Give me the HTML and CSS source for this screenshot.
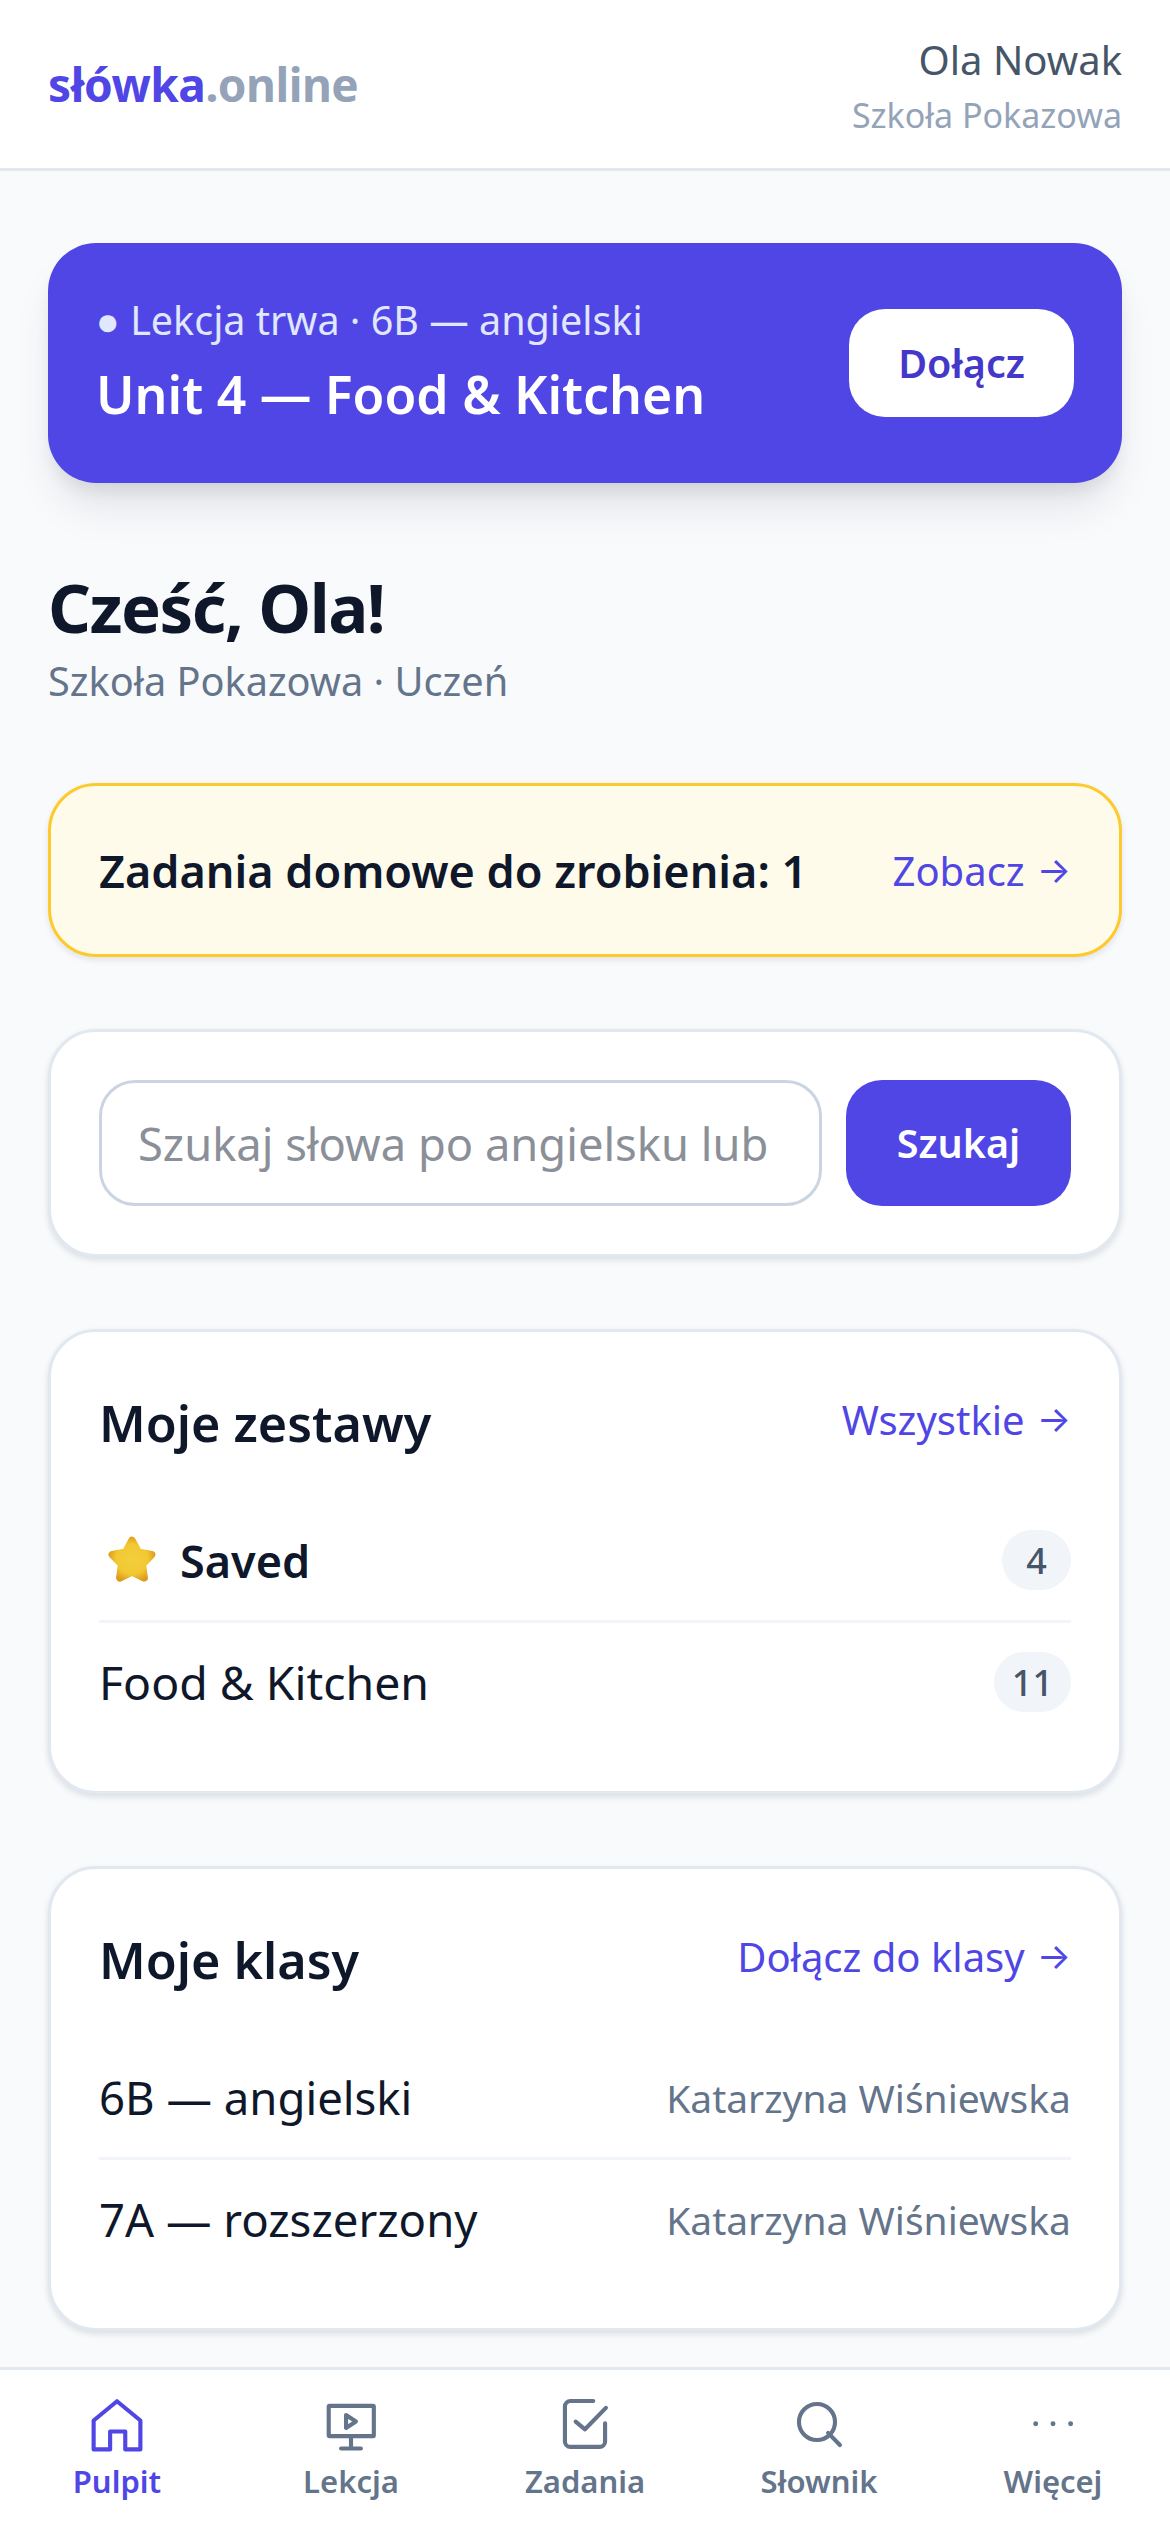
FILE: index.html
```html
<!DOCTYPE html>
<html lang="pl">
<head>
<meta charset="utf-8">
<title>słówka.online</title>
<link rel="stylesheet" href="styles.css">
</head>
<body>
<div class="app">
  <header class="topbar">
    <div class="logo">słówka<span class="logo-dim">.online</span></div>
    <div class="user">
      <div class="user-name">Ola Nowak</div>
      <div class="user-school">Szkoła Pokazowa</div>
    </div>
  </header>
  <main class="content">
    <section class="live">
      <div class="live-text">
        <div class="live-meta">● Lekcja trwa · 6B — angielski</div>
        <div class="live-title">Unit 4 — Food &amp; Kitchen</div>
      </div>
      <a class="live-btn">Dołącz</a>
    </section>
    <section class="greet">
      <h1>Cześć, Ola!</h1>
      <p>Szkoła Pokazowa · Uczeń</p>
    </section>
    <section class="hw">
      <span class="hw-text">Zadania domowe do zrobienia: 1</span>
      <a class="link">Zobacz <span class="arrow">→</span></a>
    </section>
    <section class="card search">
      <div class="search-input">Szukaj słowa po angielsku lub</div>
      <a class="search-btn">Szukaj</a>
    </section>
    <section class="card list-card">
      <div class="card-head">
        <h2>Moje zestawy</h2>
        <a class="link">Wszystkie <span class="arrow">→</span></a>
      </div>
      <div class="row">
        <span class="row-name strong">
          <svg class="star" viewBox="0 0 48 48"><defs><radialGradient id="sg" cx="0.5" cy="0.5" r="0.62"><stop offset="0" stop-color="#f3cf3d"/><stop offset="0.65" stop-color="#f2c832"/><stop offset="1" stop-color="#dd9a1c"/></radialGradient></defs><path d="M24 6l5.900 10.900L42.100 19.100 33.500 28.100 35.200 40.400 24 35 12.800 40.400 14.500 28.100 5.900 19.100 18.100 16.900z" fill="url(#sg)" stroke="url(#sg)" stroke-width="7" stroke-linejoin="round"/></svg>
          Saved
        </span>
        <span class="pill">4</span>
      </div>
      <div class="row">
        <span class="row-name wide">Food &amp; Kitchen</span>
        <span class="pill">11</span>
      </div>
    </section>
    <section class="card list-card">
      <div class="card-head">
        <h2>Moje klasy</h2>
        <a class="link">Dołącz do klasy <span class="arrow">→</span></a>
      </div>
      <div class="row">
        <span class="row-name">6B — angielski</span>
        <span class="row-side">Katarzyna Wiśniewska</span>
      </div>
      <div class="row">
        <span class="row-name">7A — rozszerzony</span>
        <span class="row-side">Katarzyna Wiśniewska</span>
      </div>
    </section>
  </main>
  <nav class="tabs">
    <a class="tab active">
      <svg class="ico" viewBox="0 0 24 24"><path d="M3.500 10 12 3l8.500 7v10.500h-5.500V14H9.500v6.500H3.500z"/></svg>
      <span>Pulpit</span>
    </a>
    <a class="tab">
      <svg class="ico" viewBox="0 0 24 24"><rect x="3.900" y="4.700" width="16.400" height="11" rx=".3"/><path d="M12 15.700v4.500M8.400 20.200h7.200"/><path d="M10.200 8l3.600 2.350-3.600 2.350z"/></svg>
      <span>Lekcja</span>
    </a>
    <a class="tab">
      <svg class="ico" viewBox="0 0 24 24"><path d="M8.600 10.400 12 13.200 19.600 5.400"/><path d="M15 2.900H6.700a2 2 0 0 0-2 2v12.700a2 2 0 0 0 2 2h10.600a2 2 0 0 0 2-2V11"/></svg>
      <span>Zadania</span>
    </a>
    <a class="tab">
      <svg class="ico" viewBox="0 0 24 24"><circle cx="11.270" cy="10.550" r="6.550"/><path d="m19.600 18.900-4.300-4.400"/></svg>
      <span>Słownik</span>
    </a>
    <a class="tab">
      <svg class="ico ico-dots" viewBox="0 0 24 24"><path d="M5.700 11.200h.01M12 11.200h.01M18.400 11.200h.01"/></svg>
      <span>Więcej</span>
    </a>
  </nav>
</div>
</body>
</html>
```
FILE: styles.css
```css
* { box-sizing: border-box; }
html, body { margin: 0; padding: 0; }
body {
  font-family: "Noto Sans", "Open Sans", sans-serif;
  background: #f8fafc;
  color: #0f172a;
}
h1, h2, p { margin: 0; }
.app { width: 1170px; height: 2532px; display: flex; flex-direction: column; overflow: hidden; }

.topbar {
  height: 171px;
  flex: none;
  background: #fff;
  border-bottom: 3px solid #e2e8f0;
  padding: 0 48px;
  display: flex;
  align-items: center;
  justify-content: space-between;
}
.logo { font-size: 46px; font-weight: 700; color: #4f46e5; letter-spacing: -0.5px; }
.logo-dim { color: #94a3b8; }
.user { text-align: right; padding-top: 3px; }
.user-name { font-size: 40px; line-height: 57px; color: #475569; }
.user-school { font-size: 34px; line-height: 51px; color: #94a3b8; margin-top: 2px; }

.content { flex: 1; padding: 72px 48px 0; display: flex; flex-direction: column; min-height: 0; }

.live {
  height: 240px;
  background: #4f46e5;
  border-radius: 48px;
  padding: 0 48px;
  display: flex;
  align-items: center;
  justify-content: space-between;
  box-shadow: 0 30px 45px -9px rgba(15, 23, 42, .1), 0 12px 18px -6px rgba(15, 23, 42, .1);
  flex: none;
}
.live-text { margin-top: -7px; }
.live-meta { font-size: 39.5px; line-height: 60px; color: #e0e7ff; }
.live-title { font-size: 51.7px; line-height: 72px; font-weight: 600; color: #fff; margin-top: 8px; }
.live-btn {
  width: 225px; height: 108px;
  background: #fff;
  color: #4338ca;
  border-radius: 36px;
  font-size: 39.5px;
  font-weight: 600;
  display: flex; align-items: center; justify-content: center;
}

.greet { margin-top: 81px; flex: none; }
.greet h1 { font-size: 67px; line-height: 87px; font-weight: 700; letter-spacing: -1.5px; }
.greet p { font-size: 39.7px; line-height: 60px; color: #64748b; }

.hw {
  margin-top: 72px;
  height: 174px;
  flex: none;
  background: #fffbeb;
  border: 3px solid #fdca2e;
  border-radius: 48px;
  padding: 0 48px;
  display: flex;
  align-items: center;
  justify-content: space-between;
  box-shadow: 0 3px 6px rgba(15, 23, 42, .1);
}
.hw-text { font-size: 45px; font-weight: 600; }
.link { font-size: 40px; color: #4f46e5; display: flex; align-items: center; gap: 12px; }
.arrow { font-family: "Inter", sans-serif; font-size: 36px; }

.card {
  background: #fff;
  border: 3px solid #e2e8f0;
  border-radius: 48px;
  box-shadow: 0 3px 6px rgba(15, 23, 42, .12);
  flex: none;
}
.search {
  margin-top: 72px;
  height: 228px;
  padding: 48px;
  display: flex;
  gap: 24px;
}
.search-input {
  flex: 1;
  min-width: 0;
  border: 3px solid #cbd5e1;
  border-radius: 36px;
  padding: 0 36px;
  display: flex;
  align-items: center;
  font-size: 45.3px;
  color: #8b8f98;
  white-space: nowrap;
  overflow: hidden;
}
.search-btn {
  width: 225px;
  background: #4f46e5;
  color: #fff;
  border-radius: 36px;
  font-size: 39.5px;
  font-weight: 600;
  display: flex; align-items: center; justify-content: center;
}

.list-card { margin-top: 72px; height: 465px; padding: 48px 48px 0; }
.card-head { display: flex; align-items: center; justify-content: space-between; height: 84px; margin-bottom: 36px; }
.card-head h2 { font-size: 50.3px; font-weight: 600; }
.card-head .link { padding-bottom: 6px; }
.row {
  height: 123px;
  display: flex;
  align-items: center;
  justify-content: space-between;
  border-bottom: 3px solid #f1f5f9;
}
.row:last-child { border-bottom: 0; padding-bottom: 5px; }
.row-name { font-size: 45.5px; display: flex; align-items: center; gap: 22px; }
.row-name.strong { font-size: 45px; font-weight: 600; }
.row-name.wide { font-size: 46.4px; }
.star { width: 52px; height: 52px; margin-left: 7px; }
.row-side { font-size: 39px; color: #64748b; }
.pill {
  min-width: 69px;
  padding: 0 18px;
  height: 60px;
  border-radius: 30px;
  background: #f1f5f9;
  color: #475569;
  font-size: 36px;
  font-weight: 500;
  display: flex; align-items: center; justify-content: center;
}

.tabs {
  height: 165px;
  flex: none;
  background: #fff;
  border-top: 3px solid #e2e8f0;
  display: grid;
  grid-template-columns: repeat(5, 1fr);
}
.tab {
  display: flex;
  flex-direction: column;
  align-items: center;
  padding-top: 23px;
  color: #64748b;
  font-size: 31px;
  font-weight: 600;
  line-height: 45px;
}
.tab.active { color: #4f46e5; }
.ico {
  width: 66px; height: 66px;
  fill: none;
  stroke: currentColor;
  stroke-width: 1.5;
  stroke-linecap: round;
  stroke-linejoin: round;
}
.ico-dots { stroke-width: 1.8; }
```
